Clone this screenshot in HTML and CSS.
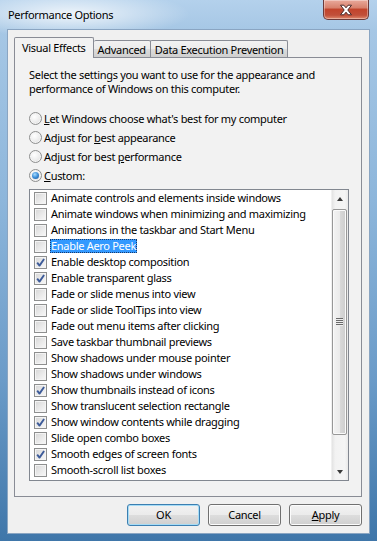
FILE: index.html
```html
<!DOCTYPE html>
<html>
<head>
<meta charset="utf-8">
<title>Performance Options</title>
<link rel="stylesheet" href="styles.css">
</head>
<body>
<div class="window">
  <div class="titlebar">
    <span class="title">Performance Options</span>
    <div class="close" aria-label="Close">
      <svg width="18" height="12" viewBox="0 0 18 12"><path d="M3.5 1.2h3.4l2.1 2.6 2.1-2.6h3.4l-3.7 4.8 3.7 4.8h-3.4l-2.1-2.6-2.1 2.6h-3.4l3.7-4.8z" fill="#fff" stroke="#4a2a2a" stroke-width="1" stroke-linejoin="round"/></svg>
    </div>
  </div>
  <div class="client">
    <div class="tabs">
      <div class="tab active">Visual Effects</div>
      <div class="tab">Advanced</div>
      <div class="tab">Data Execution Prevention</div>
    </div>
    <div class="panel">
      <p class="desc">Select the settings you want to use for the appearance and performance of Windows on this computer.</p>
      <div class="radios">
        <div class="radio-row"><span class="radio"></span><span><u>L</u>et Windows choose what's best for my computer</span></div>
        <div class="radio-row"><span class="radio"></span><span>Adjust for <u>b</u>est appearance</span></div>
        <div class="radio-row"><span class="radio"></span><span>Adjust for best <u>p</u>erformance</span></div>
        <div class="radio-row"><span class="radio checked"></span><span><u>C</u>ustom:</span></div>
      </div>
      <div class="listbox">
        <ul class="items">
          <li><span class="cb"></span><span class="lbl">Animate controls and elements inside windows</span></li>
          <li><span class="cb"></span><span class="lbl">Animate windows when minimizing and maximizing</span></li>
          <li><span class="cb"></span><span class="lbl">Animations in the taskbar and Start Menu</span></li>
          <li><span class="cb"></span><span class="lbl selected">Enable Aero Peek</span></li>
          <li><span class="cb checked"><svg viewBox="0 0 13 13"><path d="M3.2 6.6l2.3 3 4.6-6.6" /></svg></span><span class="lbl">Enable desktop composition</span></li>
          <li><span class="cb checked"><svg viewBox="0 0 13 13"><path d="M3.2 6.6l2.3 3 4.6-6.6" /></svg></span><span class="lbl">Enable transparent glass</span></li>
          <li><span class="cb"></span><span class="lbl">Fade or slide menus into view</span></li>
          <li><span class="cb"></span><span class="lbl">Fade or slide ToolTips into view</span></li>
          <li><span class="cb"></span><span class="lbl">Fade out menu items after clicking</span></li>
          <li><span class="cb"></span><span class="lbl">Save taskbar thumbnail previews</span></li>
          <li><span class="cb"></span><span class="lbl">Show shadows under mouse pointer</span></li>
          <li><span class="cb"></span><span class="lbl">Show shadows under windows</span></li>
          <li><span class="cb checked"><svg viewBox="0 0 13 13"><path d="M3.2 6.6l2.3 3 4.6-6.6" /></svg></span><span class="lbl">Show thumbnails instead of icons</span></li>
          <li><span class="cb"></span><span class="lbl">Show translucent selection rectangle</span></li>
          <li><span class="cb checked"><svg viewBox="0 0 13 13"><path d="M3.2 6.6l2.3 3 4.6-6.6" /></svg></span><span class="lbl">Show window contents while dragging</span></li>
          <li><span class="cb"></span><span class="lbl">Slide open combo boxes</span></li>
          <li><span class="cb checked"><svg viewBox="0 0 13 13"><path d="M3.2 6.6l2.3 3 4.6-6.6" /></svg></span><span class="lbl">Smooth edges of screen fonts</span></li>
          <li><span class="cb"></span><span class="lbl">Smooth-scroll list boxes</span></li>
        </ul>
        <div class="scrollbar">
          <div class="sb-btn"><span class="arrow up"></span></div>
          <div class="sb-track">
            <div class="thumb"><span class="grip"></span></div>
          </div>
          <div class="sb-btn"><span class="arrow down"></span></div>
        </div>
      </div>
    </div>
    <div class="buttons">
      <div class="btn default">OK</div>
      <div class="btn">Cancel</div>
      <div class="btn"><u>A</u>pply</div>
    </div>
  </div>
</div>
</body>
</html>
```

FILE: styles.css
```css
* { box-sizing: border-box; }
html, body { margin: 0; padding: 0; }
body {
  width: 377px;
  height: 541px;
  overflow: hidden;
  font-family: "Noto Sans", "Segoe UI", sans-serif;
  font-size: 11px;
  letter-spacing: -0.3px;
  color: #000;
}
u { text-decoration: underline; text-underline-offset: 1px; }

.window {
  width: 377px;
  height: 541px;
  display: flex;
  flex-direction: column;
  padding: 0 7px 7px 7px;
  background:
    radial-gradient(ellipse 120px 24px at 70px 14px, rgba(255,255,255,0.8), rgba(255,255,255,0) 100%),
    linear-gradient(180deg, #b4d1ec 0px, #a6c7e5 30px, #8db6db 200px, #6b9bc8 380px, #3f76a9 541px);
}

.titlebar {
  height: 29px;
  display: flex;
  justify-content: space-between;
  align-items: flex-start;
}
.title {
  padding: 6px 0 0 1px;
  line-height: 17px;
}
.close {
  width: 46px;
  height: 20px;
  margin-right: 1px;
  border: 1px solid #6b3a3a;
  border-top: none;
  border-radius: 0 0 5px 5px;
  background: linear-gradient(180deg, #e9a99b 0%, #d8826e 40%, #c2442c 50%, #c1503a 80%, #e08a6e 100%);
  box-shadow: inset 0 0 0 1px rgba(255,255,255,0.35);
  display: flex;
  align-items: center;
  justify-content: center;
}

.client {
  flex: 1;
  background: #f0f0f0;
  border: 1px solid #8aa5c2;
  padding: 7px 7px 0 6px;
  display: flex;
  flex-direction: column;
}

.tabs {
  display: flex;
  align-items: flex-end;
  position: relative;
  z-index: 1;
}
.tab {
  height: 17px;
  padding: 0 4px;
  border: 1px solid #898c95;
  border-bottom: none;
  border-radius: 2px 2px 0 0;
  background: linear-gradient(180deg, #f2f2f2 0%, #ebebeb 50%, #dddddd 51%, #cfcfcf 100%);
  display: flex;
  align-items: center;
  margin-left: -1px;
  white-space: nowrap;
}
.tab.active {
  height: 21px;
  margin-left: 0;
  margin-right: 0;
  margin-bottom: -1px;
  padding: 0 7px 1px 7px;
  background: #f2f2f2;
  position: relative;
  z-index: 2;
}
.tab.active + .tab { margin-left: 0; border-left: none; }

.panel {
  border: 1px solid #898c95;
  background: #f2f2f2;
  height: 440px;
  padding: 10px 12px 0 14px;
  display: flex;
  flex-direction: column;
}
.desc {
  margin: 0;
  line-height: 14px;
}
.radios {
  margin-top: 13px;
  display: flex;
  flex-direction: column;
}
.radio-row {
  height: 19px;
  display: flex;
  align-items: center;
  gap: 2px;
}
.radio {
  width: 13px;
  height: 13px;
  border-radius: 50%;
  border: 1px solid #8e8f8f;
  background: radial-gradient(circle at 40% 35%, #ffffff 0%, #ececec 55%, #cfcfcf 100%);
  box-shadow: inset 0 0 0 1px #f4f4f4;
  display: flex;
  align-items: center;
  justify-content: center;
  flex: none;
}
.radio.checked::after {
  content: "";
  width: 7px;
  height: 7px;
  border-radius: 50%;
  background: radial-gradient(circle at 40% 35%, #a8dcff 0%, #3c8ed8 50%, #1a4f8f 100%);
}

.listbox {
  margin-top: 4px;
  height: 292px;
  border: 1px solid #828790;
  background: #fff;
  display: flex;
}
.items {
  list-style: none;
  margin: 0;
  padding: 0 0 0 4px;
  flex: 1;
}
.items li {
  height: 16px;
  display: flex;
  align-items: center;
}
.cb {
  width: 13px;
  height: 13px;
  border: 1px solid #8e8f8f;
  background: linear-gradient(135deg, #d6d6d6 0%, #ececec 60%, #f8f8f8 100%);
  box-shadow: inset 0 0 0 1px #f4f4f4;
  flex: none;
  margin-right: 3px;
  position: relative;
}
.cb svg {
  position: absolute;
  left: -1px;
  top: -1px;
  width: 13px;
  height: 13px;
}
.cb svg path {
  fill: none;
  stroke: #3d5b99;
  stroke-width: 1.9;
  stroke-linejoin: round;
}
.lbl {
  padding: 0 1px;
  line-height: 14px;
  white-space: nowrap;
}
.lbl.selected {
  background: #3399ff;
  color: #fff;
  outline: 1px dotted #1a3a6a;
  outline-offset: -1px;
}

.scrollbar {
  width: 17px;
  display: flex;
  flex-direction: column;
  background: linear-gradient(90deg, #e3e3e3 0%, #f2f2f2 20%, #f5f5f5 80%, #e9e9e9 100%);
  border-left: 1px solid #f0f0f0;
}
.sb-btn {
  height: 17px;
  display: flex;
  align-items: center;
  justify-content: center;
  flex: none;
}
.arrow {
  width: 0;
  height: 0;
  border-left: 3.5px solid transparent;
  border-right: 3.5px solid transparent;
}
.arrow.up { border-bottom: 4px solid #3a3a3a; }
.arrow.down { border-top: 4px solid #3a3a3a; }
.sb-track {
  flex: 1;
  padding: 2px 1px 0 0;
}
.thumb {
  height: 226px;
  border: 1px solid #979797;
  border-radius: 2px;
  background: linear-gradient(90deg, #f3f3f3 0%, #ebebeb 50%, #d9d9d9 51%, #cdcdcd 100%);
  box-shadow: inset 0 0 0 1px #fafafa;
  display: flex;
  align-items: center;
  justify-content: center;
}
.grip {
  width: 7px;
  height: 8px;
  background: repeating-linear-gradient(180deg, #6a6a6a 0, #6a6a6a 1px, #eeeeee 1px, #eeeeee 2px);
}

.buttons {
  margin-top: 7px;
  display: flex;
  justify-content: flex-end;
  gap: 8px;
}
.btn {
  width: 73px;
  height: 22px;
  border: 1px solid #707070;
  border-radius: 3px;
  background: linear-gradient(180deg, #f2f2f2 0%, #ebebeb 50%, #dddddd 51%, #cfcfcf 100%);
  box-shadow: inset 0 0 0 1px #fcfcfc;
  display: flex;
  align-items: center;
  justify-content: center;
  line-height: 14px;
}
.btn.default {
  border-color: #3c7fb1;
  box-shadow: inset 0 0 0 1px #a6dcf6;
}
```
